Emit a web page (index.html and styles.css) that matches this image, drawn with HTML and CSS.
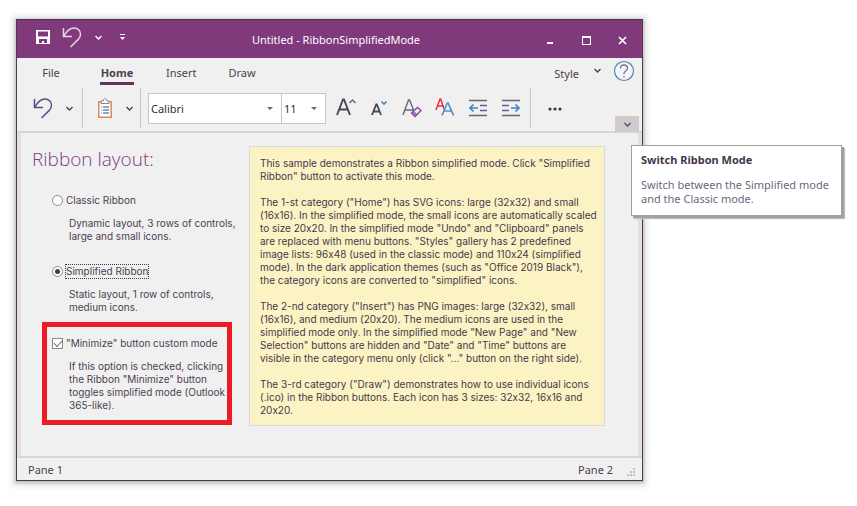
FILE: index.html
```html
<!DOCTYPE html>
<html lang="en">
<head>
<meta charset="utf-8">
<title>Untitled - RibbonSimplifiedMode</title>
<link rel="stylesheet" href="styles.css">
</head>
<body>
<svg class="defs" aria-hidden="true">
  <symbol id="undo" viewBox="0 0 20 22"><path d="M1.500 2v8.500H10M2 10C5 4.500 8.500 2 12 2c3.800 0 6.500 2.700 6.500 6.200 0 2.300-.8 3.700-2.500 5.400L8.500 21" fill="none" stroke="currentColor" stroke-width="1.500"/></symbol>
  <symbol id="chevron" viewBox="0 0 7 5"><path d="M.5 1l3 3 3-3" fill="none" stroke="currentColor" stroke-width="1.400"/></symbol>
</svg>
<div class="window">
  <header class="titlebar">
    <div class="quick">
      <button class="q-save" aria-label="Save"><svg width="14" height="14" viewBox="0 0 14 14"><path fill="#fff" fill-rule="evenodd" d="M0 0h14v14H0zM2 1.500v5h10v-5zM3 9v4h3v-2h2v2h3V9z"/></svg></button>
      <button class="q-undo" aria-label="Undo"><svg width="20" height="22"><use href="#undo"/></svg></button>
      <button class="q-more" aria-label="Undo list"><svg width="7" height="5"><use href="#chevron"/></svg></button>
      <button class="q-custom" aria-label="Customize toolbar"><svg width="5" height="6" viewBox="0 0 5 6"><path fill="#fff" d="M0 0h5v1H0zM0 3h5L2.500 6z"/></svg></button>
    </div>
    <h1 class="title">Untitled - RibbonSimplifiedMode</h1>
    <div class="controls">
      <button aria-label="Minimize"><svg width="10" height="10" viewBox="0 0 10 10"><path fill="#fff" d="M2 7h6v2H2z"/></svg></button>
      <button aria-label="Maximize"><svg width="10" height="10" viewBox="0 0 10 10"><path fill="#fff" fill-rule="evenodd" d="M1 1h9v9H1zM2 3v6h7V3z"/></svg></button>
      <button aria-label="Close"><svg width="10" height="10" viewBox="0 0 10 10"><path d="M2 2l7 7m0-7l-7 7" stroke="#fff" stroke-width="1.700"/></svg></button>
    </div>
  </header>

  <nav class="tabs">
    <a href="#file" class="short">File</a>
    <a href="#home" class="short active" aria-current="page">Home</a>
    <a href="#insert">Insert</a>
    <a href="#draw">Draw</a>
    <button class="style">Style<svg width="7" height="5"><use href="#chevron"/></svg></button>
    <button class="help" aria-label="Help"><svg width="22" height="22" viewBox="0 0 22 22" fill="none"><circle cx="11" cy="11" r="9.500" fill="#f6f6f8" stroke="#4a86bf" stroke-width="1.200"/><path d="M7.500 8.500C7.500 6.200 9 5 11 5s3.500 1.200 3.500 3.200C14.500 10.800 11 11 11 13.500v.8M11 16v1.500" stroke="#777584" stroke-width="1.300"/></svg></button>
  </nav>

  <div class="toolbar">
    <button class="tool undo" aria-label="Undo"><svg width="20" height="22"><use href="#undo"/></svg></button>
    <button class="drop wide" aria-label="Undo list"><svg width="7" height="5"><use href="#chevron"/></svg></button>
    <span class="sep"></span>
    <button class="tool clip" aria-label="Clipboard"><svg width="14" height="20" viewBox="0 0 14 20"><path d="M.8 3.800h12.400v15.400H.8z" fill="#fff" stroke="#d98a55" stroke-width="1.500"/><path d="M3 5.500V3h2.200C5.200 1.500 6 .6 7 .6S8.800 1.500 8.800 3H11v2.500z" fill="#fff" stroke="#85838b"/><path d="M3 9h1m-1 3h1m-1 3h1" stroke="#85838b"/><path d="M5 9h6m-6 3h6m-6 3h6" stroke="#4a90d0" stroke-width="1.300"/></svg></button>
    <button class="drop" aria-label="Clipboard menu"><svg width="7" height="5"><use href="#chevron"/></svg></button>
    <span class="sep"></span>
    <div class="combo font"><select aria-label="Font"><option>Calibri</option></select></div>
    <div class="combo size"><select aria-label="Font size"><option>11</option></select></div>
    <div class="format">
      <button aria-label="Grow font"><svg width="20" height="20" viewBox="0 0 20 20" fill="none"><path d="M1 17L7 1.500h1L14 17M3.500 11.500h8" stroke="#4b4452" stroke-width="1.900"/><path d="M13.500 5L16.500 2l3 3" stroke="#5364a0" stroke-width="1.400"/></svg></button>
      <button aria-label="Shrink font"><svg width="18" height="20" viewBox="0 0 18 20" fill="none"><path d="M2 17L6.200 6.500h.6L11 17M3.500 13.500h6" stroke="#4b4452" stroke-width="1.800"/><path d="M11.500 3.500l2.500 2.500 2.500-2.500" stroke="#3d87c8" stroke-width="1.600"/></svg></button>
      <button aria-label="Clear formatting"><svg width="20" height="20" viewBox="0 0 20 20" fill="none"><path d="M1 17L6.500 2h1L12 13M3 12h8" stroke="#6b6772" stroke-width="1.400"/><path d="M9.500 15l6-5.500 3.500 3-6 6z" fill="#f5edf6" stroke="#8d4a9d" stroke-width="1.400"/><path d="M9.500 15l2-1.800 3.300 3.200-1.800 2.100z" fill="#a971b3" stroke="#8d4a9d"/></svg></button>
      <button aria-label="Font color"><svg width="20" height="20" viewBox="0 0 20 20" fill="none"><path d="M1 12L5 1h.6L9.500 12M2.500 8h6" stroke="#e52d2d" stroke-width="1.400"/><path d="M7 17.500L12.300 5h.8l5.400 12.500M9 13h7.500" stroke="#4f8fce" stroke-width="1.700"/></svg></button>
      <button aria-label="Decrease indent"><svg width="18" height="18" viewBox="0 0 18 18" fill="none"><path d="M0 1.500h18M0 16.500h18" stroke="#65636f" stroke-width="1.500"/><path d="M11 6.500h7M11 11.500h7" stroke="#5e609b" stroke-width="1.500"/><path d="M1 9h8M4.500 5.500L1 9l3.500 3.500" stroke="#3e84c8" stroke-width="1.600"/></svg></button>
      <button aria-label="Increase indent"><svg width="18" height="18" viewBox="0 0 18 18" fill="none"><path d="M0 1.500h18M0 16.500h18" stroke="#65636f" stroke-width="1.500"/><path d="M0 6.500h7M0 11.500h7" stroke="#5e609b" stroke-width="1.500"/><path d="M9 9h8M13.500 5.500L17 9l-3.500 3.500" stroke="#3e84c8" stroke-width="1.600"/></svg></button>
    </div>
    <span class="sep"></span>
    <button class="dots" aria-label="More commands"><svg width="14" height="4" viewBox="0 0 14 4" fill="#3a3540"><circle cx="2" cy="2" r="1.600"/><circle cx="7" cy="2" r="1.600"/><circle cx="12" cy="2" r="1.600"/></svg></button>
    <div class="mode">
      <button class="collapse" aria-label="Switch Ribbon Mode" aria-describedby="tip"><svg width="7" height="5"><use href="#chevron"/></svg></button>
      <div class="tooltip" id="tip" role="tooltip">
        <strong>Switch Ribbon Mode</strong>
        <p>Switch between the Simplified mode<br>and the Classic mode.</p>
      </div>
    </div>
  </div>

  <main class="content">
    <section class="options">
      <h2>Ribbon layout:</h2>
      <div class="option">
        <input type="radio" name="layout" id="classic"><label for="classic">Classic Ribbon</label>
        <p>Dynamic layout, 3 rows of controls,<br>large and small icons.</p>
      </div>
      <div class="option">
        <input type="radio" name="layout" id="simple" checked><label for="simple" class="focused">Simplified Ribbon</label>
        <p>Static layout, 1 row of controls,<br>medium icons.</p>
      </div>
      <div class="option highlight">
        <input type="checkbox" id="minimize" checked><label for="minimize">"Minimize" button custom mode</label>
        <p>If this option is checked, clicking<br>the Ribbon "Minimize" button<br>toggles simplified mode (Outlook<br>365-like).</p>
      </div>
    </section>
    <article class="notes">
      <p>This sample demonstrates a Ribbon simplified mode. Click "Simplified<br>Ribbon" button to activate this mode.</p>
      <p>The 1-st category ("Home") has SVG icons: large (32x32) and small<br>(16x16). In the simplified mode, the small icons are automatically scaled<br>to size 20x20. In the simplified mode "Undo" and "Clipboard" panels<br>are replaced with menu buttons. "Styles" gallery has 2 predefined<br>image lists: 96x48 (used in the classic mode) and 110x24 (simplified<br>mode). In the dark application themes (such as "Office 2019 Black"),<br>the category icons are converted to "simplified" icons.</p>
      <p>The 2-nd category ("Insert") has PNG images: large (32x32), small<br>(16x16), and medium (20x20). The medium icons are used in the<br>simplified mode only. In the simplified mode "New Page" and "New<br>Selection" buttons are hidden and "Date" and "Time" buttons are<br>visible in the category menu only (click "..." button on the right side).</p>
      <p>The 3-rd category ("Draw") demonstrates how to use individual icons<br>(.ico) in the Ribbon buttons. Each icon has 3 sizes: 32x32, 16x16 and<br>20x20.</p>
    </article>
  </main>

  <footer class="status">
    <span>Pane 1</span><span class="pane2">Pane 2</span>
    <svg width="8" height="8" viewBox="0 0 8 8" fill="#c4bfc4"><path d="M6 0h2v2H6zM3 3h2v2H3zM6 3h2v2H6zM0 6h2v2H0zM3 6h2v2H3zM6 6h2v2H6z"/></svg>
  </footer>
</div>
</body>
</html>
```
FILE: styles.css
```css
* { box-sizing: border-box; }
body { margin: 0; background: #fff; font: 10px/13px Inter, "Liberation Sans", Arial, sans-serif; font-variant-ligatures: no-contextual; color: #4d4052; }
h1, h2, p { margin: 0; font-weight: normal; }
button { border: 0; padding: 0; margin: 0; background: none; color: inherit; font: inherit; display: flex; align-items: center; justify-content: center; }
svg { display: block; flex: none; }
.defs { position: absolute; width: 0; height: 0; }
.window { margin: 19px 214px 25px 16px; border: 1px solid #4d3850; background: #f0f0f0; box-shadow: 0 1px 3px 1px #bdb9bd, 0 1px 5px 5px #eeedee; }

.titlebar { display: flex; height: 38px; background: #80397b; color: #fff; }
.quick { display: flex; width: 123px; padding-left: 13px; }
.quick button { height: 34px; }
.q-save { width: 26px; }
.q-undo { width: 32px; color: #e6d8e5; }
.q-more { width: 20px; }
.q-custom { width: 28px; }
.title { flex: 1; text-align: center; font: 11px/40px "Noto Sans", "Open Sans", sans-serif; }
.controls { display: flex; padding: 2px 2px 0 0; }
.controls button { width: 36px; }

.tabs { display: flex; height: 30px; padding: 0 7px 0 17px; font: 11px/15px "Noto Sans", "Open Sans", sans-serif; }
.tabs a { height: 27px; margin-right: 32px; padding-top: 7px; text-align: center; color: inherit; text-decoration: none; }
.tabs .short { width: 34px; }
.tabs .active { font-weight: bold; border-bottom: 3px solid #66305f; }
.tabs .style { gap: 15px; margin-left: auto; margin-right: 12px; }
.style svg { margin-bottom: 5px; }
.help { height: 26px; }

.toolbar { display: flex; align-items: flex-start; height: 45px; padding: 0 3px 0 13px; border-bottom: 2px solid #d9d4d7; }
.toolbar .tool { width: 26px; height: 40px; }
.toolbar .undo { color: #51518a; }
.drop { width: 22px; height: 40px; }
.drop.wide { width: 26px; }
.sep { width: 1px; height: 40px; background: #cfc6cb; }
.clip { margin-left: 9px; }
.combo { position: relative; height: 31px; margin-top: 5px; }
.combo.font { width: 134px; margin-left: 7px; }
.combo.size { width: 45px; margin-left: -1px; }
.combo select { appearance: none; width: 100%; height: 100%; border: 1px solid #cbc5c9; border-radius: 0; background: #fff; color: #332b38; padding: 0 2px; font: 11px "Noto Sans", "Open Sans", sans-serif; }
.combo::after { content: ""; position: absolute; right: 9px; top: 14px; border: 3px solid transparent; border-top-color: #6b6577; border-bottom: 0; }
.format { display: flex; margin: 0 3px; }
.format button { width: 33px; height: 40px; }
.dots { width: 48px; height: 42px; }
.mode { position: relative; margin: 28px 0 0 auto; }
.collapse { width: 24px; height: 16px; background: #d1cbce; color: #4c4d7b; }
.tooltip { position: absolute; left: 16px; top: 29px; z-index: 2; width: 211px; padding: 7px 9px 9px; border: 1px solid #a0a0a2; background: #fff; box-shadow: 2px 2px 0 #a0a1a3, 3px 3px 1px #c0c0c2; white-space: nowrap; font: 11px/14px "Noto Sans", "Open Sans", sans-serif; color: #74647d; }
.tooltip strong { color: #44354b; }
.tooltip p { margin-top: 11px; }

.content { display: flex; align-items: flex-start; gap: 17px; padding: 13px 33px 30px 11px; border: solid #e3dfe3; border-width: 0 4px; }
.options { width: 200px; flex: none; }
.options h2 { color: #80397b; font: 300 19px/26px "Open Sans", "Noto Sans", sans-serif; margin-bottom: 21px; }
.option { display: grid; grid-template-columns: 11px 1fr; column-gap: 2px; align-items: center; justify-items: start; margin: 0 0 21px 20px; }
.option input { appearance: none; width: 11px; height: 11px; margin: 0; border: 1px solid #8b868e; background: #fff; display: grid; place-items: center; }
.option input[type="radio"] { border-radius: 50%; }
.option input[type="radio"]:checked::before { content: ""; width: 5px; height: 5px; border-radius: 50%; background: #44394a; }
.option input[type="checkbox"]:checked::before { content: ""; width: 7px; height: 4px; margin-bottom: 2px; border: solid #6c6673; border-width: 0 0 1px 1px; transform: rotate(-45deg); }
.option label { border: 1px dotted transparent; line-height: 13px; }
.option .focused { border-color: #44394a; }
.option p { grid-column: 2; margin: 9px 0 0 4px; white-space: nowrap; }
.option.highlight { margin: -13px 0 0 10px; border: 5px solid #ed1c24; padding: 9px 5px 8px; }
.notes { flex: 1; min-width: 0; padding: 10px 10px 8px; border: 1px solid #dddadd; background: #fcf3c4; color: #44394a; white-space: nowrap; }
.notes p + p { margin-top: 13px; }

.status { display: flex; align-items: center; height: 24px; padding: 0 7px 0 11px; border-top: 2px solid #d9d4d7; font: 11px/15px "Noto Sans", "Open Sans", sans-serif; }
.pane2 { margin: 0 14px 0 auto; }
.status svg { margin-top: 5px; }
```
